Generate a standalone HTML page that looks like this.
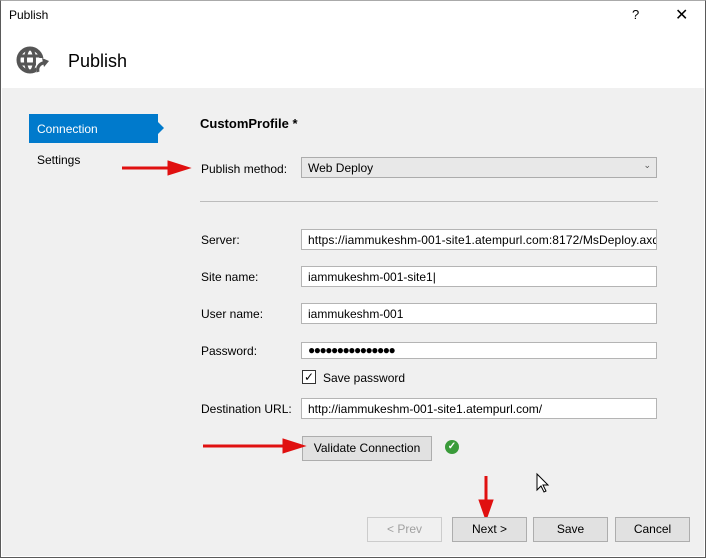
<!DOCTYPE html>
<html><head><style>
*{box-sizing:border-box;margin:0;padding:0}
body{width:706px;height:558px;overflow:hidden;font-family:"Liberation Sans",sans-serif;font-size:12px;color:#000;background:#fff;position:relative}
.a{position:absolute}
.win{left:0;top:0;width:706px;height:558px;border:1px solid #5a5a5a;border-top:1px solid #aaa}
.body{left:2px;top:88px;width:702px;height:468px;background:#f0f0f0}
.inp{position:absolute;left:301px;width:356px;height:21px;background:#fff;border:1px solid #b4b4b4;padding:3px 6px;font-size:12px;white-space:nowrap;overflow:hidden}
.lbl{position:absolute;left:201px;font-size:12px}
.btn{position:absolute;top:517px;height:25px;width:75px;background:#e1e1e1;border:1px solid #adadad;text-align:center;line-height:23px;font-size:12px}
</style></head><body>
<div class="a win"></div>
<div class="a" style="left:9px;top:8px;font-size:12px">Publish</div>
<div class="a" style="left:632px;top:7px;font-size:13px">?</div>
<div class="a" style="left:675px;top:5px;font-size:16px">✕</div>
<svg class="a" style="left:15px;top:45px" width="36" height="32" viewBox="0 0 36 32">
<circle cx="15" cy="15" r="11.5" fill="none" stroke="#555" stroke-width="4"/>
<ellipse cx="15" cy="15" rx="4.5" ry="11" fill="none" stroke="#555" stroke-width="3"/>
<line x1="3" y1="11" x2="27" y2="11" stroke="#555" stroke-width="3"/>
<line x1="3" y1="19" x2="27" y2="19" stroke="#555" stroke-width="3"/>
<rect x="21" y="13" width="14" height="18" fill="#fff"/>
<path d="M23 27 A7 7 0 0 1 31 18" fill="none" stroke="#555" stroke-width="3.2"/>
<path d="M27 13 L34 16 L29 22 Z" fill="#555"/>
</svg>
<div class="a" style="left:68px;top:51px;font-size:18px">Publish</div>
<div class="a body"></div>
<div class="a" style="left:29px;top:114px;width:129px;height:29px;background:#007acc;color:#fff;padding:8px 0 0 8px">Connection</div>
<div class="a" style="left:158px;top:122px;width:0;height:0;border-top:6px solid transparent;border-bottom:6px solid transparent;border-left:6px solid #007acc"></div>
<div class="a" style="left:37px;top:153px">Settings</div>
<div class="a" style="left:200px;top:116px;font-weight:bold;font-size:13px">CustomProfile *</div>
<div class="lbl" style="top:162px">Publish method:</div>
<div class="inp" style="top:157px;background:#e8e8e8;border-color:#acacac">Web Deploy<span style="position:absolute;right:5px;top:2px;font-size:9px;color:#555">⌄</span></div>
<div class="a" style="left:200px;top:201px;width:458px;height:1px;background:#bcbcbc"></div>
<div class="lbl" style="top:233px">Server:</div>
<div class="inp" style="top:229px;letter-spacing:0.1px">https://iammukeshm-001-site1.atempurl.com:8172/MsDeploy.axd</div>
<div class="lbl" style="top:270px">Site name:</div>
<div class="inp" style="top:266px">iammukeshm-001-site1|</div>
<div class="lbl" style="top:307px">User name:</div>
<div class="inp" style="top:303px">iammukeshm-001</div>
<div class="lbl" style="top:344px">Password:</div>
<div class="inp" style="top:342px;height:17px;padding:0 6px;font-size:12px;line-height:15px;letter-spacing:-1.5px">●●●●●●●●●●●●●●●</div>
<div class="a" style="left:302px;top:370px;width:14px;height:14px;background:#fff;border:1px solid #333;font-size:12px;line-height:12px;text-align:center">✓</div>
<div class="a" style="left:323px;top:371px">Save password</div>
<div class="lbl" style="top:402px">Destination URL:</div>
<div class="inp" style="top:398px">http://iammukeshm-001-site1.atempurl.com/</div>
<div class="a" style="left:302px;top:436px;width:130px;height:25px;background:#e1e1e1;border:1px solid #adadad;text-align:center;line-height:23px">Validate Connection</div>
<div class="a" style="left:445px;top:440px;width:14px;height:14px;border-radius:50%;background:#3a9b3a;color:#fff;font-size:10px;line-height:14px;text-align:center;font-weight:bold">✓</div>
<svg class="a" style="left:0;top:0" width="706" height="558">
<g fill="#e01010" stroke="#e01010">
<line x1="122" y1="168" x2="170" y2="168" stroke-width="3"/><path d="M168 161 L190 168 L168 175Z"/>
<line x1="203" y1="446" x2="285" y2="446" stroke-width="3"/><path d="M283 439 L305 446 L283 453Z"/>
<line x1="486" y1="476" x2="486" y2="502" stroke-width="3"/><path d="M479 500 L486 520 L493 500Z"/>
</g>
<path d="M537 474 L537 490 L541 486 L544 492 L546 491 L543 485 L548 485 Z" fill="#fff" stroke="#000" stroke-width="1"/>
</svg>
<div class="btn" style="left:367px;color:#a0a0a0;background:#f0f0f0;border-color:#ccc">&lt; Prev</div>
<div class="btn" style="left:452px">Next &gt;</div>
<div class="btn" style="left:533px">Save</div>
<div class="btn" style="left:615px">Cancel</div>
</body></html>
